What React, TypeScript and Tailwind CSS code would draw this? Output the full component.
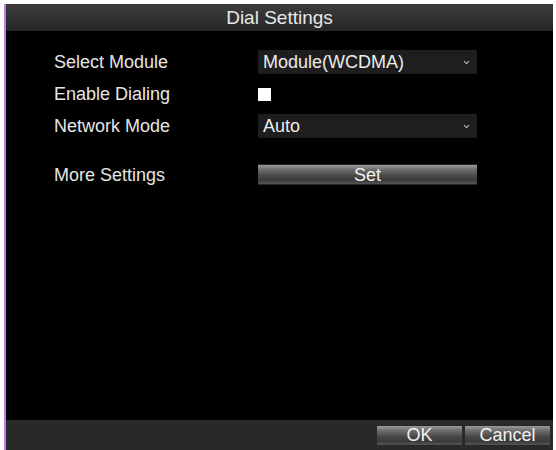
import { ChevronDown } from 'lucide-react';

type RowProps = {
  label: string;
  children: React.ReactNode;
  className?: string;
};

function Row({ label, children, className = '' }: RowProps) {
  return (
    <div className={`flex items-center ${className}`}>
      <span className="w-[204px] text-[18px] leading-none text-[#e6e6e6]">{label}</span>
      <div className="w-[219px]">{children}</div>
    </div>
  );
}

function Combo({ value }: { value: string }) {
  return (
    <div className="flex h-[24px] items-center justify-between bg-[#1e1e1e] pl-[5px] pr-[6px] text-[18px] leading-none text-[#ececec]">
      <span>{value}</span>
      <ChevronDown className="h-[9px] w-[9px] text-[#bdbdbd]" strokeWidth={3} />
    </div>
  );
}

function GreyButton({ label, className = '' }: { label: string; className?: string }) {
  return (
    <button
      type="button"
      className={`flex h-[21px] items-center justify-center border-y border-[#262626] bg-[linear-gradient(#9a9a9a_0%,#6c6c6c_25%,#4a4a4a_55%,#3a3a3a_80%,#555_100%)] text-[18px] leading-none text-[#f2f2f2] ${className}`}
    >
      {label}
    </button>
  );
}

export default function App() {
  return (
    <div className="h-[450px] w-[556px] bg-white pl-[4px] pr-[3px] pt-[4px] font-['Liberation_Sans',Arial,sans-serif]">
      <div className="flex h-full flex-col border-l-[2px] border-[#c07ee0] bg-black">
        <div className="flex h-[27px] items-center justify-center bg-[linear-gradient(#3c3c3c,#262626)] text-[19px] leading-none text-[#e8e8e8]">
          Dial Settings
        </div>

        <div className="flex flex-1 flex-col pl-[48px] pt-[19px]">
          <Row label="Select Module">
            <Combo value="Module(WCDMA)" />
          </Row>
          <Row label="Enable Dialing" className="mt-[8px] h-[24px]">
            <div className="h-[13px] w-[13px] bg-white" />
          </Row>
          <Row label="Network Mode" className="mt-[8px]">
            <Combo value="Auto" />
          </Row>
          <Row label="More Settings" className="mt-[26px]">
            <GreyButton label="Set" className="w-full" />
          </Row>
        </div>

        <div className="flex h-[30px] items-center justify-end gap-[3px] bg-[#292927] pr-[3px]">
          <GreyButton label="OK" className="w-[85px]" />
          <GreyButton label="Cancel" className="w-[85px]" />
        </div>
      </div>
    </div>
  );
}
